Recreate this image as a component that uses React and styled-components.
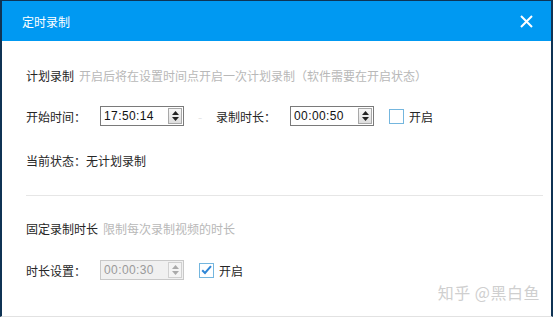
import React from 'react';
import styled, { createGlobalStyle } from 'styled-components';

const Global = createGlobalStyle`
  html, body {
    margin: 0;
    padding: 0;
    background: #fff;
    overflow: hidden;
  }
  body {
    font-family: "Noto Sans CJK SC", "Liberation Sans", sans-serif;
    font-size: 12px;
    color: #222;
  }
`;

const Window = styled.div`
  position: relative;
  box-sizing: border-box;
  width: 553px;
  height: 317px;
  background: #fff;
  border-top: 1px solid #0d3457;
  border-left: 2px solid #0f3354;
  border-right: 2px solid #0f3354;
  border-bottom: 1px solid #e2e2e2;
  display: flex;
  flex-direction: column;
`;

const Header = styled.div`
  height: 40px;
  flex: none;
  background: #0099f2;
  display: flex;
  align-items: center;
  justify-content: space-between;
  padding: 0 17px 0 20px;
  color: #fff;
  font-size: 12px;
`;

const Close = styled.button`
  border: 0;
  background: none;
  padding: 0;
  width: 16px;
  height: 16px;
  display: flex;
  align-items: center;
  justify-content: center;
  cursor: pointer;
`;

const Body = styled.div`
  padding: 24px 8px 0 24px;
  display: flex;
  flex-direction: column;
`;

const Row = styled.div`
  height: 20px;
  display: flex;
  align-items: center;
  margin-top: ${(p) => p.$gap || 0}px;
`;

const Strong = styled.span`
  color: #262626;
`;

const Hint = styled.span`
  color: #b8b8b8;
  margin-left: 5px;
`;

const Label = styled.span`
  width: 74px;
  flex: none;
  color: #262626;
`;

const Dash = styled.span`
  width: 32px;
  text-align: center;
  color: #e4e4e4;
`;

const Spin = styled.div`
  box-sizing: border-box;
  width: 84px;
  height: 20px;
  border: 1px solid ${(p) => (p.$disabled ? '#c8c8c8' : '#7a7a7a')};
  background: ${(p) => (p.$disabled ? '#f0f0f0' : '#fff')};
  display: flex;
  align-items: center;
  justify-content: space-between;
  padding: 0 1px 0 3px;
`;

const SpinValue = styled.span`
  font-family: "Liberation Sans", Arial, sans-serif;
  font-size: 12px;
  letter-spacing: 0.4px;
  color: ${(p) => (p.$disabled ? '#9a9a9a' : '#111')};
`;

const Arrows = styled.div`
  box-sizing: border-box;
  width: 14px;
  height: 16px;
  border: 1px solid ${(p) => (p.$disabled ? '#d0d0d0' : '#a8a8a8')};
  background: ${(p) => (p.$disabled ? '#f4f4f4' : 'linear-gradient(#f6f6f6, #dedede)')};
  display: flex;
  flex-direction: column;
  align-items: center;
  justify-content: center;
  gap: 2px;
`;

const Check = styled.span`
  box-sizing: border-box;
  width: 15px;
  height: 15px;
  flex: none;
  border: 1px solid #74b6de;
  background: #fff;
  margin-left: 15px;
  margin-right: 5px;
  display: flex;
  align-items: center;
  justify-content: center;
`;

const Divider = styled.div`
  height: 1px;
  background: #e6e6e6;
  margin: 25px 0 0 0;
`;

const Watermark = styled.div`
  position: absolute;
  right: 11px;
  bottom: 12px;
  font-size: 16px;
  color: #cfcfcf;
  letter-spacing: 0.5px;
`;

const Spinner = ({ value, disabled }) => (
  <Spin $disabled={disabled}>
    <SpinValue $disabled={disabled}>{value}</SpinValue>
    <Arrows $disabled={disabled}>
      <svg width="7" height="4" viewBox="0 0 7 4">
        <path d="M0 4 L3.5 0 L7 4 Z" fill={disabled ? '#aaa' : '#222'} />
      </svg>
      <svg width="7" height="4" viewBox="0 0 7 4">
        <path d="M0 0 L3.5 4 L7 0 Z" fill={disabled ? '#aaa' : '#222'} />
      </svg>
    </Arrows>
  </Spin>
);

const CheckBox = ({ checked }) => (
  <Check>
    {checked && (
      <svg width="11" height="10" viewBox="0 0 11 10">
        <path d="M1.2 5.2 L4 8 L10 1.2" fill="none" stroke="#2f86d6" strokeWidth="2" />
      </svg>
    )}
  </Check>
);

export default function App() {
  return (
    <>
      <Global />
      <Window>
        <Header>
          <span>定时录制</span>
          <Close aria-label="close">
            <svg width="13" height="13" viewBox="0 0 13 13">
              <path d="M1 1 L12 12 M12 1 L1 12" stroke="#fff" strokeWidth="2" />
            </svg>
          </Close>
        </Header>
        <Body>
          <Row>
            <Strong>计划录制</Strong>
            <Hint>开启后将在设置时间点开启一次计划录制（软件需要在开启状态）</Hint>
          </Row>
          <Row $gap={21}>
            <Label>开始时间：</Label>
            <Spinner value="17:50:14" />
            <Dash>-</Dash>
            <Label>录制时长：</Label>
            <Spinner value="00:00:50" />
            <CheckBox />
            <Strong>开启</Strong>
          </Row>
          <Row $gap={24}>
            <Strong>当前状态：无计划录制</Strong>
          </Row>
          <Divider />
          <Row $gap={22}>
            <Strong>固定录制时长</Strong>
            <Hint>限制每次录制视频的时长</Hint>
          </Row>
          <Row $gap={22}>
            <Label>时长设置：</Label>
            <Spinner value="00:00:30" disabled />
            <CheckBox checked />
            <Strong>开启</Strong>
          </Row>
        </Body>
        <Watermark>知乎 @黑白鱼</Watermark>
      </Window>
    </>
  );
}
